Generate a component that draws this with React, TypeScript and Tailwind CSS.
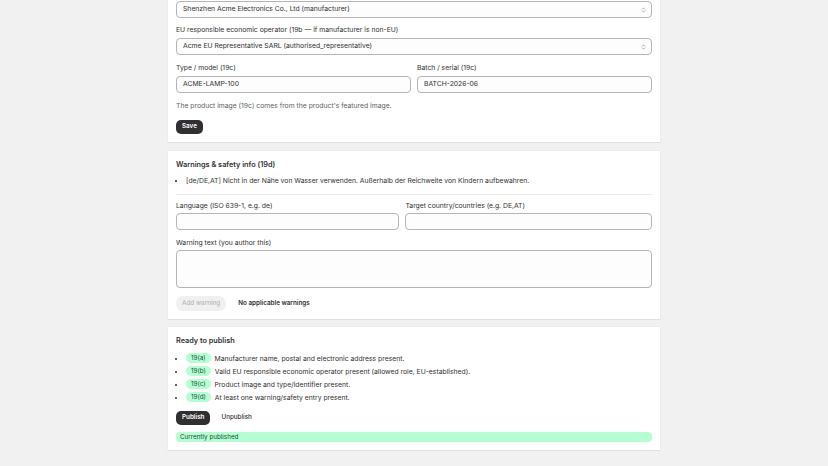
const font = { fontFamily: "Inter, 'Noto Sans', sans-serif" };

function Label({ children }: { children: React.ReactNode }) {
  return <div className="text-[6.8px] leading-[10px] text-[#303030]">{children}</div>;
}

function UpDown() {
  return (
    <svg viewBox="0 0 8 10" className="h-[6px] w-[5px]" fill="none" stroke="#8a8a8a" strokeWidth="1.2" strokeLinecap="round" strokeLinejoin="round">
      <path d="M2 3.5 4 1.5 6 3.5" />
      <path d="M2 6.5 4 8.5 6 6.5" />
    </svg>
  );
}

function Select({ value }: { value: string }) {
  return (
    <div className="flex h-[17px] items-center justify-between rounded-[4px] border border-[#b5b5b5] bg-[#fdfdfd] pl-[6px] pr-[5px] text-[6.8px] text-[#303030]">
      <span>{value}</span>
      <UpDown />
    </div>
  );
}

function Input({ value = "", tall = false }: { value?: string; tall?: boolean }) {
  return (
    <div
      className={`flex rounded-[4px] border border-[#b5b5b5] bg-[#fdfdfd] px-[6px] text-[6.8px] text-[#303030] ${
        tall ? "h-[38px] items-start" : "h-[17px] items-center"
      }`}
    >
      {value}
    </div>
  );
}

function Card({ children, className = "" }: { children: React.ReactNode; className?: string }) {
  return (
    <div className={`bg-white p-[8px] shadow-[0_1px_0_0_#e0e0e0,0_0_0_1px_#ececec] ${className}`}>
      {children}
    </div>
  );
}

const checks = [
  { code: "19(a)", text: "Manufacturer name, postal and electronic address present." },
  { code: "19(b)", text: "Valid EU responsible economic operator present (allowed role, EU-established)." },
  { code: "19(c)", text: "Product image and type/identifier present." },
  { code: "19(d)", text: "At least one warning/safety entry present." },
];

export default function App() {
  return (
    <div className="min-h-[466px] bg-[#f1f1f1] pb-[17px]" style={font}>
      <div className="mx-auto flex w-[492px] flex-col">
        <Card className="-mt-[7px]">
          <Select value="Shenzhen Acme Electronics Co., Ltd (manufacturer)" />
          <div className="mt-[7px] flex flex-col gap-[3px]">
            <Label>EU responsible economic operator (19b — if manufacturer is non-EU)</Label>
            <Select value="Acme EU Representative SARL (authorised_representative)" />
          </div>
          <div className="mt-[8px] grid grid-cols-2 gap-[6px]">
            <div className="flex flex-col gap-[3px]">
              <Label>Type / model (19c)</Label>
              <Input value="ACME-LAMP-100" />
            </div>
            <div className="flex flex-col gap-[3px]">
              <Label>Batch / serial (19c)</Label>
              <Input value="BATCH-2026-06" />
            </div>
          </div>
          <p className="mt-[8px] text-[6.8px] leading-[10px] text-[#616161]">
            The product image (19c) comes from the product's featured image.
          </p>
          <div className="mt-[9px] flex">
            <button className="h-[14px] rounded-[5px] bg-[#303030] px-[6px] text-[6.3px] font-semibold text-white">
              Save
            </button>
          </div>
        </Card>

        <Card className="mt-[9px]">
          <h2 className="text-[7.3px] font-semibold leading-[12px] text-[#303030]">Warnings &amp; safety info (19d)</h2>
          <ul className="mt-[5px] list-disc pl-[10px] text-[6.8px] leading-[10px] text-[#303030]">
            <li>[de/DE,AT] Nicht in der Nähe von Wasser verwenden. Außerhalb der Reichweite von Kindern aufbewahren.</li>
          </ul>
          <div className="mt-[8px] h-px bg-[#ebebeb]" />
          <div className="mt-[6px] flex gap-[6px]">
            <div className="flex flex-auto flex-col gap-[2px]">
              <Label>Language (ISO 639-1, e.g. de)</Label>
              <Input />
            </div>
            <div className="flex flex-auto flex-col gap-[2px]">
              <Label>Target country/countries (e.g. DE,AT)</Label>
              <Input />
            </div>
          </div>
          <div className="mt-[8px] flex flex-col gap-[2px]">
            <Label>Warning text (you author this)</Label>
            <Input tall />
          </div>
          <div className="mt-[8px] flex items-center gap-[6px]">
            <button className="h-[15px] rounded-[7px] bg-[#f0f0f0] px-[6px] text-[6.3px] font-medium text-[#b5b5b5]">
              Add warning
            </button>
            <button className="h-[15px] px-[6px] text-[6.3px] font-semibold text-[#303030]">No applicable warnings</button>
          </div>
        </Card>

        <Card className="mt-[8px]">
          <h2 className="text-[7.3px] font-semibold leading-[12px] text-[#303030]">Ready to publish</h2>
          <ul className="mt-[5px] list-disc pl-[10px] text-[6.8px] leading-[13px] text-[#303030]">
            {checks.map((c) => (
              <li key={c.code} className="h-[13px]">
                <span className="mr-[4px] inline-block rounded-full bg-[#b4fed2] px-[5px] align-[1px] text-[6.3px] leading-[10px] text-[#0c5132]">
                  {c.code}
                </span>
                {c.text}
              </li>
            ))}
          </ul>
          <div className="mt-[7px] flex items-center gap-[5px]">
            <button className="h-[14px] rounded-[5px] bg-[#303030] px-[6px] text-[6.3px] font-semibold text-white">
              Publish
            </button>
            <button className="h-[14px] px-[6px] text-[6.3px] font-medium text-[#303030]">Unpublish</button>
          </div>
          <div className="mt-[7px] h-[10px] rounded-[4px] bg-[#b4fed2] px-[4px] text-[6.3px] leading-[10px] text-[#0c5132]">
            Currently published
          </div>
        </Card>
      </div>
    </div>
  );
}
